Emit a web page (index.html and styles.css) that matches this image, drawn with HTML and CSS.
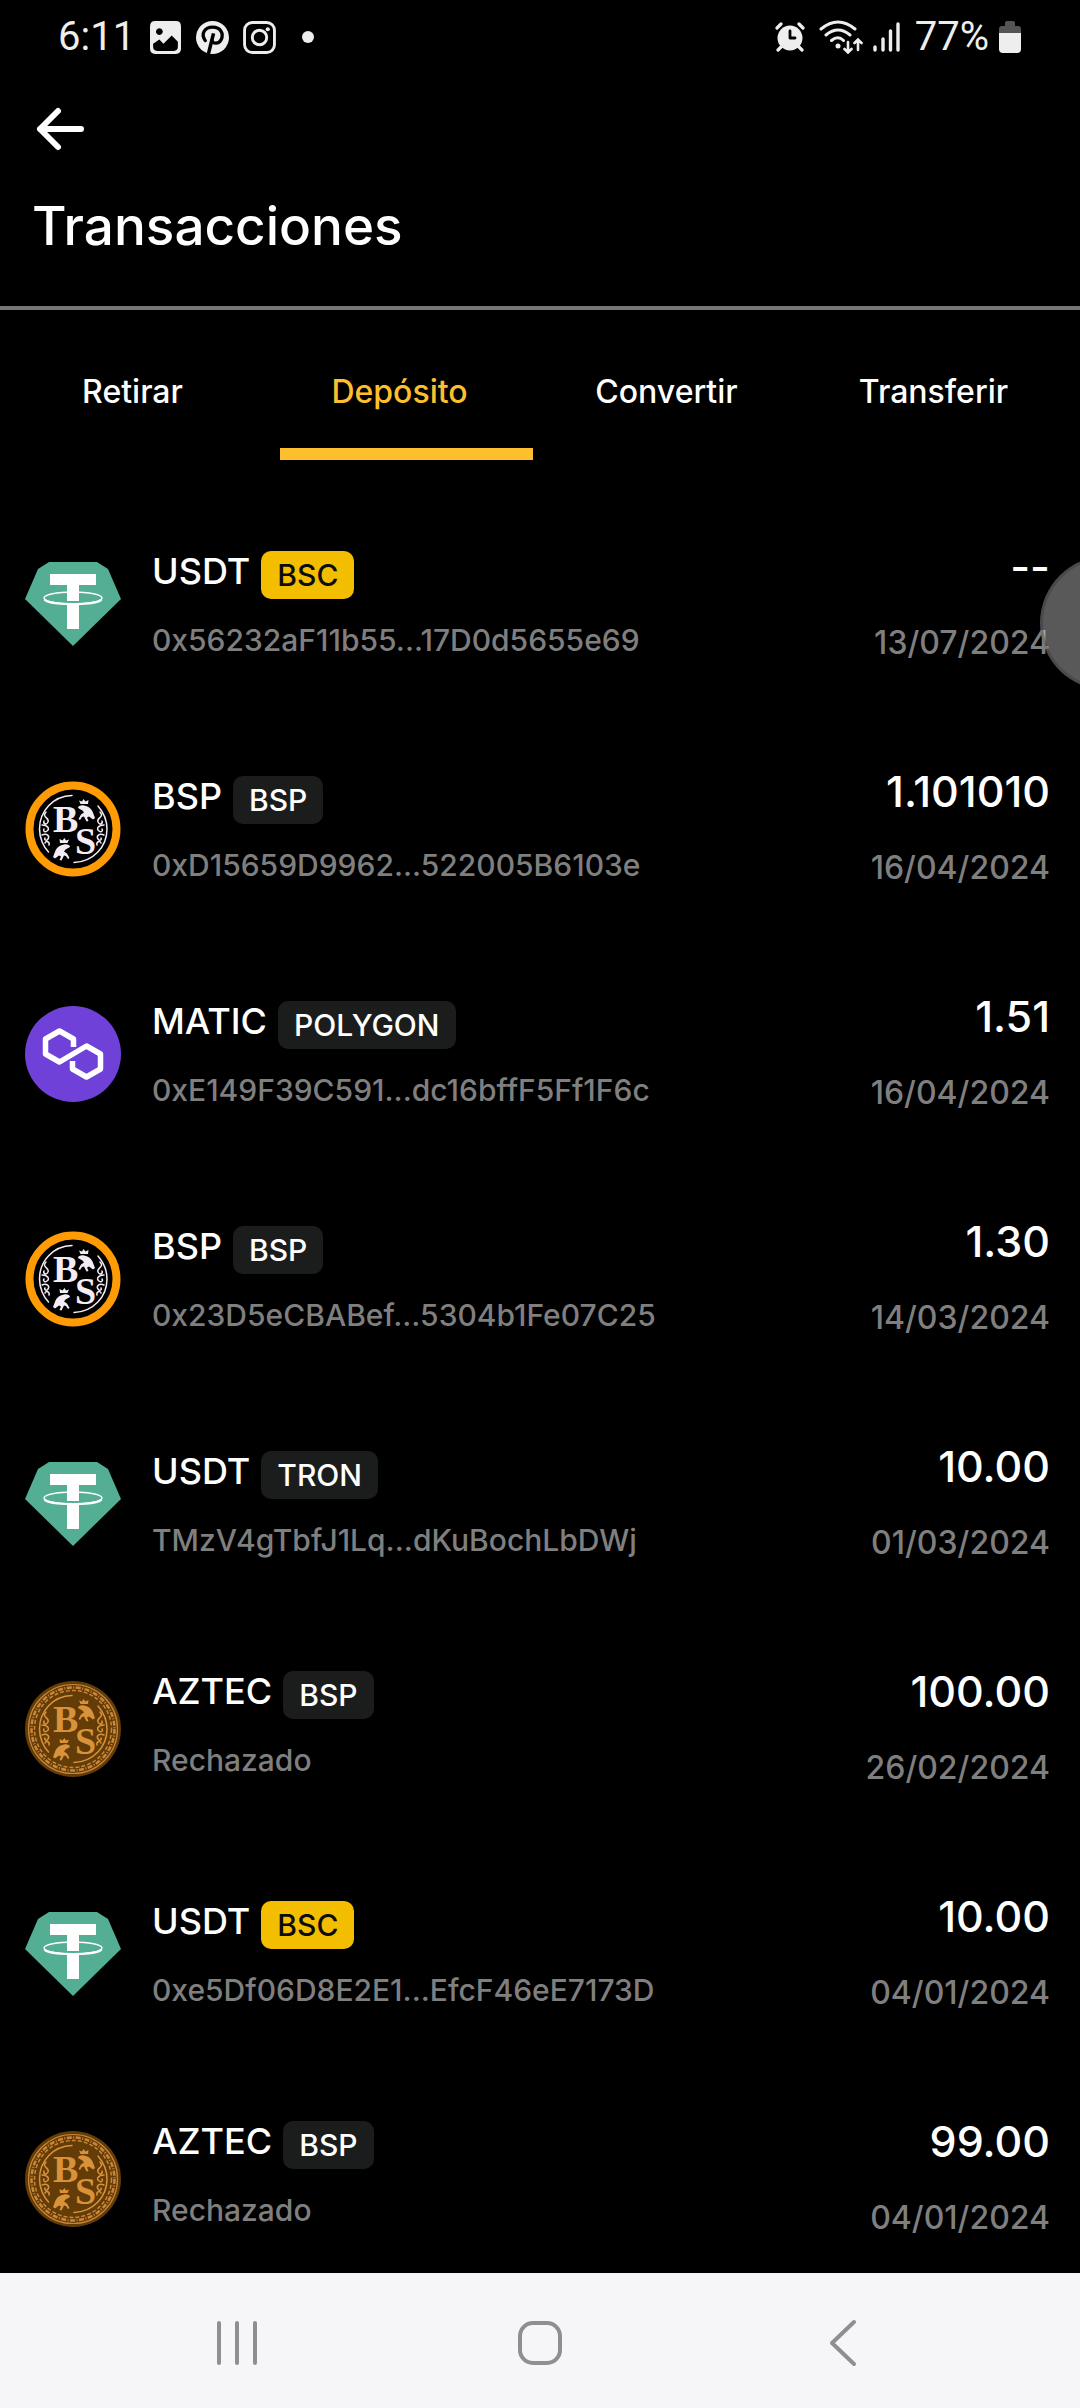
FILE: index.html
```html
<!DOCTYPE html>
<html lang="es">
<head>
<meta charset="utf-8">
<meta name="viewport" content="width=device-width, initial-scale=1">
<title>Transacciones</title>
<link rel="stylesheet" href="styles.css">
</head>
<body>
<svg class="sprite" aria-hidden="true">
  <symbol id="tether" viewBox="0 0 96 96">
    <path fill="#53ae94" d="M24 6h48l11 7 13 30-48 47L0 43l13-30z"/>
    <ellipse cx="48" cy="42" rx="29" ry="6" fill="none" stroke="#fff" stroke-width="1.4"/>
    <path fill="none" stroke="#fff" stroke-width="2" d="M19.500 43.500c5 6 52 6 57 0"/>
    <path fill="#fff" d="M25 18h46v11H54v16H42V29H25zM42 48h12v25H42z"/>
  </symbol>
  <symbol id="polygon" viewBox="0 0 96 96">
    <circle cx="48" cy="48" r="48" fill="#6f41d8"/>
    <path fill="none" stroke="#fff" stroke-width="5.500" stroke-linejoin="round" d="M48.500 41v-8l-14-8-14 8v15l14 8 27-16 14 8v15l-14 8-14-8v-8"/>
  </symbol>
  <symbol id="frog" viewBox="0 0 96 96">
    <path fill="currentColor" d="M53 27c0-2 3-3 6-2.500 4 .5 7 3 8.500 6l2.500 6.500-2 1.500-4-3-2 1 1.500 3.500-2 .5-2.500-5-2 .5-2 3-1.500-1 2.500-4.500 3-2-1.500-2z"/>
    <path fill="currentColor" d="M55.500 23l-1.500-3.500 3 1 1.500-2.500 2 2.500 3-1.500-.5 4z"/>
  </symbol>
  <symbol id="coin-art" viewBox="0 0 96 96">
    <g fill="none" stroke="currentColor" stroke-width="1.500" stroke-linecap="round">
      <path d="M47 14.500C28 15 14.500 30 14.500 48c0 9 4 18 9 23M73 25c6 7 9 14 9 23 0 18-14 33-33 33.500"/>
      <path d="M21 31c-5 5 4 6 2 10s-5 1-4-1M17 44c6 0 8 4 5 6s-4-1-3-2M17 54c5-2 8 1 6 4s-4 0-3-1M20 62c1-3 5-1 4 2M75 31c5 5-4 6-2 10s5 1 4-1M79 44c-6 0-8 4-5 6s4-1 3-2M79 54c-5-2-8 1-6 4s4 0 3-1M76 62c-1-3-5-1-4 2"/>
    </g>
    <use href="#frog"/>
    <use href="#frog" transform="translate(98 39) scale(-1 1)"/>
  </symbol>
  <symbol id="bsp" viewBox="0 0 96 96">
    <circle cx="48" cy="48" r="43.500" fill="#000" stroke="#ff9b05" stroke-width="8"/>
    <use href="#coin-art" width="96" height="96"/>
  </symbol>
  <symbol id="aztec" viewBox="0 0 96 96">
    <circle cx="48" cy="48" r="48" fill="#633c08"/>
    <g fill="none" stroke="#c98637">
      <circle cx="48" cy="48" r="44.500" stroke-width="1.200"/>
      <circle cx="48" cy="48" r="41.500" stroke-width="2.500" stroke-dasharray="5 1.500 1 1.500"/>
      <circle cx="48" cy="48" r="38.500" stroke-width="1.500" stroke-dasharray="4 2"/>
    </g>
    <use href="#coin-art" width="96" height="96"/>
  </symbol>
</svg>

<div class="screen">
  <div class="status">
    <div class="status-side">
      <span class="clock">6:11</span>
      <svg class="app-icon" viewBox="0 0 32 32"><path fill="#eee" fill-rule="evenodd" d="M6 0h20q5 0 5 5v22q0 5-5 5H6q-5 0-5-5V5q0-5 5-5zm4 7a3.300 3.300 0 1 0 .1 0zM4 22v3q0 4 4 4h16q4 0 4-4v-5l-6-6-8 8-4-4z"/></svg>
      <svg class="app-icon" viewBox="0 0 32 32"><circle cx="16" cy="16" r="16" fill="#eee"/><path fill="none" stroke="#000" stroke-width="3.200" stroke-linecap="round" d="M9 19C4 12 9 6 16 6c8 0 11 6 8.500 12-2.500 5-8.500 4-9 1"/><path fill="none" stroke="#000" stroke-width="3.400" d="M17 12l-5 20"/></svg>
      <svg class="app-icon" viewBox="0 0 32 32" fill="none" stroke="#eee" stroke-width="2.800"><rect x="1.500" y="1.500" width="29" height="29" rx="7.500"/><circle cx="16" cy="16" r="7"/><circle cx="24" cy="8" r="2" fill="#eee" stroke="none"/></svg>
      <span class="dot"></span>
    </div>
    <div class="status-side status-right">
      <svg class="alarm" viewBox="0 0 30 30"><path stroke="#eee" stroke-width="3.200" stroke-linecap="round" d="M2 6l4-4M28 6l-4-4M7 24l-4 4M23 24l4 4"/><circle cx="15" cy="16" r="12.500" fill="#eee"/><path fill="none" stroke="#000" stroke-width="2.800" stroke-linecap="round" stroke-linejoin="round" d="M15 9v7h5"/></svg>
      <svg class="wifi" viewBox="0 0 44 34" fill="none" stroke="#eee" stroke-width="3" stroke-linecap="round"><path d="M2 9q17-14 34 0M7 15q12-10 24 0M12.500 20.500q6.500-5.500 12 0"/><circle cx="19" cy="26" r="2.500" fill="#eee" stroke="none"/><path stroke-width="2.600" d="M29 22v10M25.500 29l3.500 3.500 3.500-3.500M39 30V20M35.500 23l3.500-3.500 3.500 3.500"/></svg>
      <svg class="signal" viewBox="0 0 28 30" stroke="#eee" stroke-width="3.400" stroke-linecap="round"><path d="M2 25v3M10 17v11M17.500 9v19M25 2v26"/></svg>
      <span class="percent">77%</span>
      <svg class="battery" viewBox="0 0 22 32"><path fill="#555" d="M6 2q0-2 2-2h6q2 0 2 2v3h3q3 0 3 3v4H0V8q0-3 3-3h3z"/><path fill="#eee" d="M0 12h22v16q0 4-4 4H4q-4 0-4-4z"/></svg>
    </div>
  </div>

  <header class="header">
    <button class="back" aria-label="Volver"><svg viewBox="0 0 48 48" fill="none" stroke="#fff" stroke-width="6" stroke-linecap="round" stroke-linejoin="round"><path d="M24 6L6 24l18 18M6 24h41"/></svg></button>
    <h1>Transacciones</h1>
  </header>

  <nav class="tabs">
    <button class="tab">Retirar</button>
    <button class="tab active">Depósito</button>
    <button class="tab">Convertir</button>
    <button class="tab">Transferir</button>
  </nav>

  <ul class="list">
    <li class="row"><svg class="coin" viewBox="0 0 96 96"><use href="#tether"/></svg>
      <div class="info"><div class="name">USDT <span class="badge bsc">BSC</span></div><div class="sub">0x56232aF11b55...17D0d5655e69</div></div>
      <div class="value"><div class="amount">--</div><div class="date">13/07/2024</div></div></li>
    <li class="row"><svg class="coin coin-bsp" viewBox="0 0 96 96"><use href="#bsp"/><text x="28" y="51">B</text><text x="50" y="73">S</text></svg>
      <div class="info"><div class="name">BSP <span class="badge">BSP</span></div><div class="sub">0xD15659D9962...522005B6103e</div></div>
      <div class="value"><div class="amount">1.101010</div><div class="date">16/04/2024</div></div></li>
    <li class="row"><svg class="coin" viewBox="0 0 96 96"><use href="#polygon"/></svg>
      <div class="info"><div class="name">MATIC <span class="badge">POLYGON</span></div><div class="sub">0xE149F39C591...dc16bffF5Ff1F6c</div></div>
      <div class="value"><div class="amount">1.51</div><div class="date">16/04/2024</div></div></li>
    <li class="row"><svg class="coin coin-bsp" viewBox="0 0 96 96"><use href="#bsp"/><text x="28" y="51">B</text><text x="50" y="73">S</text></svg>
      <div class="info"><div class="name">BSP <span class="badge">BSP</span></div><div class="sub">0x23D5eCBABef...5304b1Fe07C25</div></div>
      <div class="value"><div class="amount">1.30</div><div class="date">14/03/2024</div></div></li>
    <li class="row"><svg class="coin" viewBox="0 0 96 96"><use href="#tether"/></svg>
      <div class="info"><div class="name">USDT <span class="badge">TRON</span></div><div class="sub">TMzV4gTbfJ1Lq...dKuBochLbDWj</div></div>
      <div class="value"><div class="amount">10.00</div><div class="date">01/03/2024</div></div></li>
    <li class="row rejected"><svg class="coin coin-aztec" viewBox="0 0 96 96"><use href="#aztec"/><text x="28" y="51">B</text><text x="50" y="73">S</text></svg>
      <div class="info"><div class="name">AZTEC <span class="badge">BSP</span></div><div class="sub">Rechazado</div></div>
      <div class="value"><div class="amount">100.00</div><div class="date">26/02/2024</div></div></li>
    <li class="row"><svg class="coin" viewBox="0 0 96 96"><use href="#tether"/></svg>
      <div class="info"><div class="name">USDT <span class="badge bsc">BSC</span></div><div class="sub">0xe5Df06D8E2E1...EfcF46eE7173D</div></div>
      <div class="value"><div class="amount">10.00</div><div class="date">04/01/2024</div></div></li>
    <li class="row rejected"><svg class="coin coin-aztec" viewBox="0 0 96 96"><use href="#aztec"/><text x="28" y="51">B</text><text x="50" y="73">S</text></svg>
      <div class="info"><div class="name">AZTEC <span class="badge">BSP</span></div><div class="sub">Rechazado</div></div>
      <div class="value"><div class="amount">99.00</div><div class="date">04/01/2024</div></div></li>
  </ul>

  <nav class="system">
    <button aria-label="Recientes"><svg viewBox="0 0 48 48"><path d="M6 4v40M24 4v40M42 4v40"/></svg></button>
    <button aria-label="Inicio"><svg viewBox="0 0 48 48"><rect x="4" y="4" width="40" height="40" rx="13"/></svg></button>
    <button aria-label="Atrás"><svg viewBox="0 0 48 48"><path d="M35 3L13 24l22 21"/></svg></button>
  </nav>
</div>
<button class="bubble" aria-label="Panel flotante"></button>
</body>
</html>
```
FILE: styles.css
```css
* { box-sizing: border-box; }

body {
  margin: 0;
  background: #000;
  color: #fff;
  font-family: Inter, sans-serif;
  font-weight: 500;
  overflow: hidden;
}

button {
  padding: 0;
  border: 0;
  background: none;
  color: inherit;
  font: inherit;
}

svg { display: block; }

.sprite {
  position: absolute;
  width: 0;
  height: 0;
}

.screen {
  display: flex;
  flex-direction: column;
  height: 100vh;
}

.status {
  display: flex;
  justify-content: space-between;
  align-items: center;
  flex: none;
  height: 74px;
  padding: 0 59px 0 58px;
  color: #eee;
  font-family: Roboto, sans-serif;
  font-weight: 400;
  font-size: 40px;
  line-height: 40px;
}

.status-side {
  display: flex;
  align-items: center;
  gap: 14px;
}

.app-icon { width: 33px; height: 33px; }

.dot {
  width: 12px;
  height: 12px;
  margin-left: 12px;
  border-radius: 50%;
  background: #eee;
}

.status-right { gap: 10px; }
.alarm { width: 30px; height: 30px; margin-right: 4px; }
.wifi { width: 44px; height: 34px; }
.signal { width: 28px; height: 30px; margin-right: 4px; }
.battery { width: 22px; height: 32px; }

.header {
  flex: none;
  padding: 31px 32px 48px;
  border-bottom: 4px solid #777;
}

.back { display: block; }
.back svg { width: 52px; height: 48px; }

h1 {
  margin: 41px 0 0;
  font-size: 53px;
  line-height: 64px;
  font-weight: 500;
}

.tabs {
  display: grid;
  grid-template-columns: repeat(4, 1fr);
  gap: 14px;
  flex: none;
  padding: 0 13px;
}

.tab {
  padding: 62px 14px 36px 0;
  border-bottom: 12px solid transparent;
  font-size: 32px;
  line-height: 40px;
}

.tab.active {
  border-color: #fdc02c;
  color: #fdc02c;
}

.list {
  flex: 1;
  min-height: 0;
  margin: 31px 0 0;
  padding: 0;
  list-style: none;
  overflow: hidden;
}

.row {
  display: flex;
  align-items: flex-start;
  gap: 31px;
  height: 225px;
  padding: 0 30px 0 25px;
}

.coin {
  flex: none;
  align-self: center;
  width: 96px;
  height: 96px;
  fill: currentColor;
  font-family: "Liberation Serif", serif;
  font-weight: 700;
  font-size: 38px;
}

.coin-bsp { color: #f4ecf4; }
.coin-aztec { color: #d99239; }

.info {
  flex: 1;
  padding-top: 60px;
}

.rejected .info { padding-top: 55px; }

.name {
  display: flex;
  gap: 11px;
  font-size: 36px;
  line-height: 40px;
}

.badge {
  padding: 0 16px;
  border-radius: 10px;
  background: #1b1d1c;
  font-size: 30px;
  line-height: 48px;
}

.badge.bsc {
  background: #f3bd00;
  color: #0c0c0c;
}

.sub {
  margin-top: 21px;
  color: #7f7f7f;
  font-size: 30px;
  line-height: 40px;
}

.value {
  padding-top: 47px;
  text-align: right;
}

.amount {
  font-size: 43px;
  line-height: 56px;
}

.date {
  margin-top: 29px;
  color: #7f7f7f;
  font-size: 32px;
  line-height: 40px;
}

.system {
  display: grid;
  grid-template-columns: repeat(3, 1fr);
  justify-items: center;
  align-items: center;
  flex: none;
  height: 135px;
  padding: 4px 86px 0;
  background: #f6f6f8;
}

.system svg {
  width: 48px;
  height: 48px;
  fill: none;
  stroke: #8f8f8f;
  stroke-width: 4;
  stroke-linecap: round;
  stroke-linejoin: round;
}

/* Floating handle, half hidden past the right edge */
.bubble {
  position: fixed;
  top: 556px;
  right: -94px;
  width: 134px;
  height: 134px;
  border: 3px solid rgba(60, 60, 60, 0.5);
  border-radius: 50%;
  background: rgba(255, 255, 255, 0.35);
}
```
